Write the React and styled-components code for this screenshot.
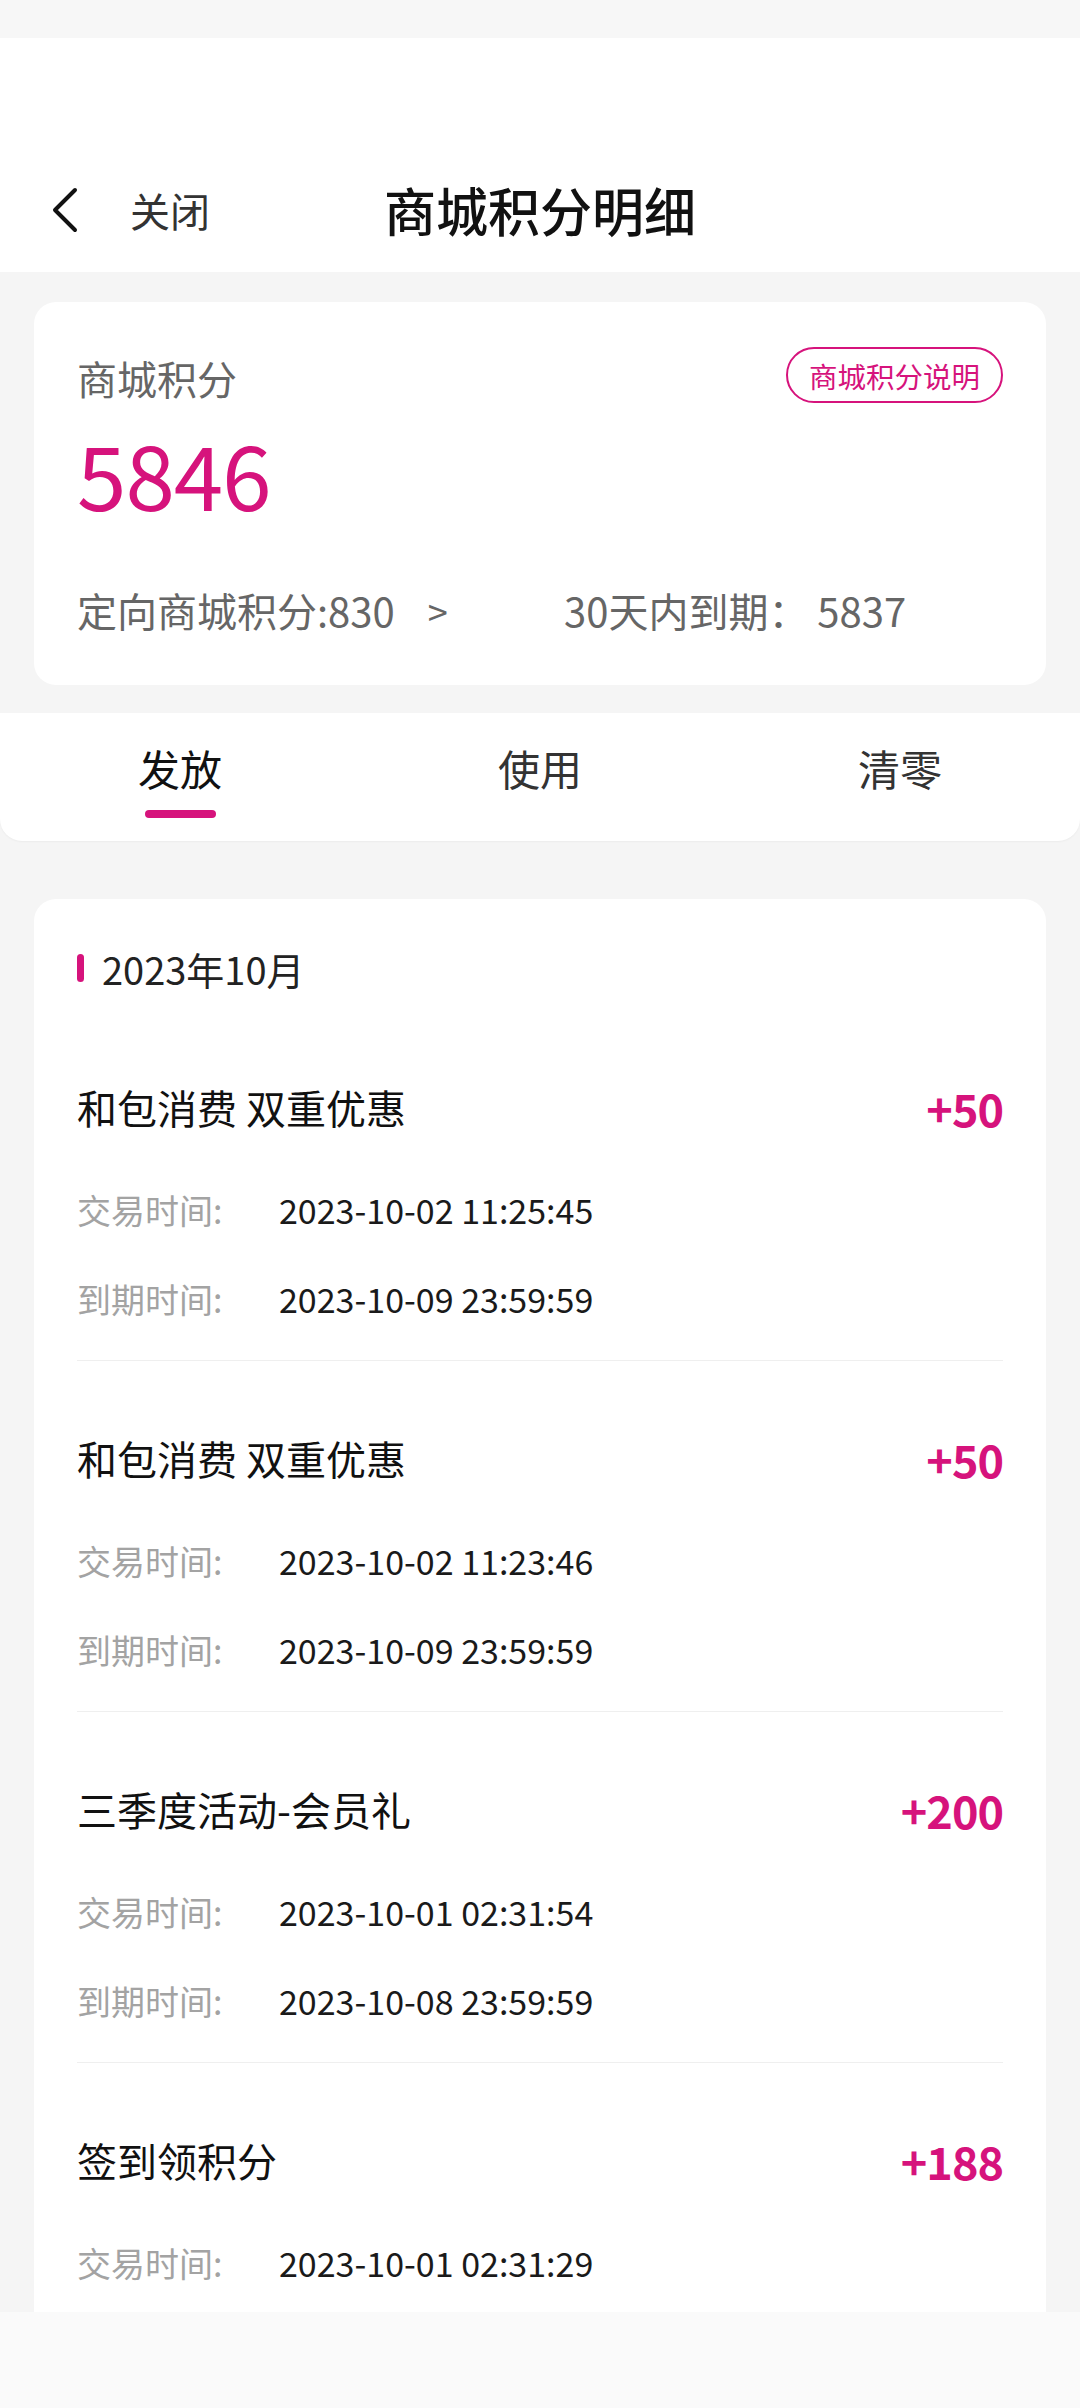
import styled, { createGlobalStyle } from 'styled-components';

const PINK = '#d6137c';

const GlobalStyle = createGlobalStyle`
  html, body {
    margin: 0;
    padding: 0;
    background: #f5f5f5;
  }
  body {
    font-family: "Noto Sans CJK SC", "Noto Sans", sans-serif;
  }
  * {
    box-sizing: border-box;
  }
`;

const Screen = styled.div`
  width: 1080px;
  height: 2408px;
  display: flex;
  flex-direction: column;
  overflow: hidden;
  background: #f5f5f5;
`;

const StatusBar = styled.div`
  height: 38px;
  flex-shrink: 0;
  background: #f7f7f7;
`;

const Header = styled.header`
  height: 234px;
  flex-shrink: 0;
  background: #fff;
  padding-top: 110px;
`;

const NavRow = styled.div`
  height: 124px;
  display: grid;
  grid-template-columns: 1fr auto 1fr;
  align-items: center;
`;

const BackButton = styled.div`
  display: flex;
  align-items: center;
  padding-left: 50px;
  gap: 50px;
  color: #333;
  font-size: 40px;
`;

const Title = styled.h1`
  margin: 0;
  font-size: 52px;
  font-weight: 500;
  color: #111;
  line-height: 124px;
`;

const Body = styled.main`
  flex: 1;
  overflow: hidden;
  padding-top: 30px;
`;

const Card = styled.section`
  margin: 0 34px;
  background: #fff;
  border-radius: 22px;
  padding: ${({ $pad }) => $pad};
`;

const TopRow = styled.div`
  height: 64px;
  display: flex;
  align-items: center;
  justify-content: space-between;
`;

const Label = styled.div`
  font-size: 40px;
  color: #666;
`;

const Badge = styled.div`
  height: 56px;
  padding: 0 21px;
  border: 2px solid ${PINK};
  border-radius: 28px;
  color: ${PINK};
  font-size: 28.5px;
  display: flex;
  align-items: center;
  margin-top: -6px;
`;

const BigNumber = styled.div`
  margin-top: 8px;
  height: 110px;
  line-height: 110px;
  font-size: 89px;
  color: ${PINK};
  letter-spacing: -1px;
`;

const SummaryRow = styled.div`
  margin-top: 52px;
  height: 60px;
  display: flex;
  align-items: center;
  font-size: 40px;
  color: #666;
`;

const SummaryItem = styled.div`
  flex: 0 0 ${({ $w }) => $w || 'auto'};
  display: flex;
  align-items: center;
`;

const Arrow = styled.span`
  margin-left: 33px;
  font-size: 36px;
`;

const TabBar = styled.nav`
  margin-top: 28px;
  height: 128px;
  background: #fff;
  border-radius: 0 0 22px 22px;
  box-shadow: 0 1px 2px rgba(0, 0, 0, 0.04);
  display: grid;
  grid-template-columns: repeat(3, 1fr);
`;

const Tab = styled.div`
  display: flex;
  flex-direction: column;
  align-items: center;
  padding-top: 28px;
`;

const TabLabel = styled.div`
  height: 54px;
  line-height: 54px;
  font-size: 42px;
  color: ${({ $active }) => ($active ? '#111' : '#333')};
`;

const TabIndicator = styled.div`
  margin-top: 15px;
  width: 71px;
  height: 8px;
  border-radius: 4px;
  background: ${({ $active }) => ($active ? PINK : 'transparent')};
`;

const ListCard = styled(Card)`
  margin-top: 58px;
  padding: 44px 43px 0;
  min-height: 1600px;
`;

const MonthHeading = styled.div`
  height: 50px;
  margin-bottom: 17px;
  display: flex;
  align-items: center;
  gap: 18px;
  font-size: 38px;
  color: #222;

  &::before {
    content: '';
    width: 7px;
    height: 28px;
    border-radius: 4px;
    background: ${PINK};
  }
`;

const Record = styled.div`
  padding: 67px 0 37px;
  border-bottom: 1px solid #efefef;
`;

const RecordHead = styled.div`
  height: 60px;
  display: flex;
  align-items: center;
  justify-content: space-between;
`;

const RecordName = styled.div`
  font-size: 40px;
  color: #111;
`;

const Points = styled.div`
  font-size: 45px;
  font-weight: 700;
  color: ${PINK};
  letter-spacing: -1px;
`;

const InfoRow = styled.div`
  margin-top: ${({ $gap }) => $gap}px;
  height: 50px;
  display: flex;
  align-items: center;
  font-size: 34px;
`;

const InfoLabel = styled.span`
  width: 202px;
  color: #a3a3a3;
`;

const InfoValue = styled.span`
  color: #1a1a1a;
`;

const BottomBar = styled.div`
  height: 96px;
  flex-shrink: 0;
  background: #fafafa;
`;

const RECORDS = [
  { name: '和包消费 双重优惠', points: '+50', trade: '2023-10-02 11:25:45', expire: '2023-10-09 23:59:59' },
  { name: '和包消费 双重优惠', points: '+50', trade: '2023-10-02 11:23:46', expire: '2023-10-09 23:59:59' },
  { name: '三季度活动-会员礼', points: '+200', trade: '2023-10-01 02:31:54', expire: '2023-10-08 23:59:59' },
  { name: '签到领积分', points: '+188', trade: '2023-10-01 02:31:29' },
];

const TABS = ['发放', '使用', '清零'];

function BackIcon() {
  return (
    <svg width="30" height="46" viewBox="0 0 30 46" fill="none">
      <polyline points="25,3 5,23 25,43" stroke="#111" strokeWidth="4" strokeLinecap="round" strokeLinejoin="round" />
    </svg>
  );
}

export default function App() {
  return (
    <Screen>
      <GlobalStyle />
      <StatusBar />
      <Header>
        <NavRow>
          <BackButton>
            <BackIcon />
            关闭
          </BackButton>
          <Title>商城积分明细</Title>
          <div />
        </NavRow>
      </Header>

      <Body>
        <Card $pad="44px 43px 45px">
          <TopRow>
            <Label>商城积分</Label>
            <Badge>商城积分说明</Badge>
          </TopRow>
          <BigNumber>5846</BigNumber>
          <SummaryRow>
            <SummaryItem $w="487px">
              定向商城积分:830
              <Arrow>&gt;</Arrow>
            </SummaryItem>
            <SummaryItem>30天内到期：&nbsp;5837</SummaryItem>
          </SummaryRow>
        </Card>

        <TabBar>
          {TABS.map((t, i) => (
            <Tab key={t}>
              <TabLabel $active={i === 0}>{t}</TabLabel>
              <TabIndicator $active={i === 0} />
            </Tab>
          ))}
        </TabBar>

        <ListCard>
          <MonthHeading>2023年10月</MonthHeading>
          {RECORDS.map((r, i) => (
            <Record key={i}>
              <RecordHead>
                <RecordName>{r.name}</RecordName>
                <Points>{r.points}</Points>
              </RecordHead>
              <InfoRow $gap={47}>
                <InfoLabel>交易时间:</InfoLabel>
                <InfoValue>{r.trade}</InfoValue>
              </InfoRow>
              {r.expire && (
                <InfoRow $gap={39}>
                  <InfoLabel>到期时间:</InfoLabel>
                  <InfoValue>{r.expire}</InfoValue>
                </InfoRow>
              )}
            </Record>
          ))}
        </ListCard>
      </Body>

      <BottomBar />
    </Screen>
  );
}
